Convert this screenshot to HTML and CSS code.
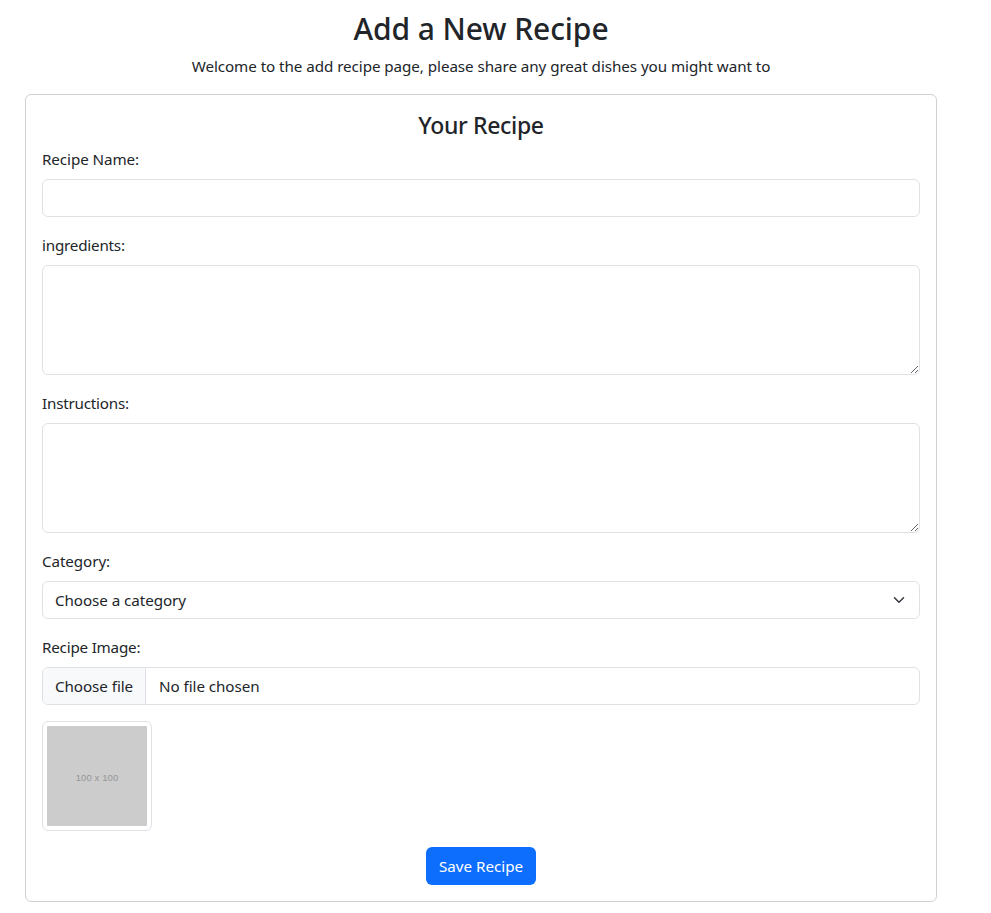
FILE: index.html
```html
<!DOCTYPE html>
<html lang="en">
<head>
<meta charset="utf-8">
<title>Add a New Recipe</title>
<link rel="stylesheet" href="styles.css">
</head>
<body>
<main class="page">
  <header class="intro">
    <h1 class="title">Add a New Recipe</h1>
    <p class="lead">Welcome to the add recipe page, please share any great dishes you might want to</p>
  </header>
  <form class="card">
    <h2 class="card-title">Your Recipe</h2>
    <div class="field">
      <label class="label" for="name">Recipe Name:</label>
      <input class="control" id="name" type="text">
    </div>
    <div class="field">
      <label class="label label-tight" for="ingredients">ingredients:</label>
      <textarea class="control area" id="ingredients"></textarea>
    </div>
    <div class="field">
      <label class="label label-tight" for="instructions">Instructions:</label>
      <textarea class="control area" id="instructions"></textarea>
    </div>
    <div class="field">
      <label class="label">Category:</label>
      <div class="control select">
        <span>Choose a category</span>
        <svg class="chevron" viewBox="0 0 16 16" width="16" height="12"><path fill="none" stroke="#343a40" stroke-linecap="round" stroke-linejoin="round" stroke-width="2" d="m2 5 6 6 6-6"/></svg>
      </div>
    </div>
    <div class="field">
      <label class="label label-tight">Recipe Image:</label>
      <div class="control file">
        <span class="file-button">Choose file</span>
        <span class="file-name">No file chosen</span>
      </div>
    </div>
    <div class="thumb"><div class="placeholder">100 x 100</div></div>
    <div class="actions"><button class="save" type="button">Save Recipe</button></div>
  </form>
</main>
</body>
</html>
```
FILE: styles.css
```css
* { box-sizing: border-box; }
body {
  margin: 0;
  background: #fff;
  color: #212529;
  font: 16px/24px "Segoe UI", "Noto Sans", "Open Sans", sans-serif;
}
.page { width: 912px; margin-left: 25px; padding-top: 10px; }
.intro { text-align: center; }
.title { margin: 0 0 6px; font-size: 30px; line-height: 38px; font-weight: 500; letter-spacing: -0.08px; }
.lead { margin: 0 0 16px; font-size: 15.2px; letter-spacing: -0.06px; }
.card { height: 808px; padding: 16px; border: 1px solid #ced0d2; border-radius: 6px; }
.card-title { margin: 0 0 7px; font-size: 23px; line-height: 29px; font-weight: 500; letter-spacing: -0.35px; text-align: center; }
.field { margin-bottom: 16px; }
.label { display: block; width: max-content; margin-bottom: 8px; font-size: 15.2px; letter-spacing: -0.08px; }
.label-tight { letter-spacing: -0.2px; }
.control {
  display: block;
  width: 100%;
  height: 38px;
  padding: 6px 12px;
  border: 1px solid #dee2e6;
  border-radius: 6px;
  background: #fff;
  color: #212529;
  font: inherit;
  font-size: 15.2px;
  letter-spacing: -0.06px;
}
.area { height: 110px; resize: vertical; }
.select { display: flex; align-items: center; justify-content: space-between; }
.file { display: flex; padding: 0; overflow: hidden; }
.file-button { width: 103px; padding: 6px 12px; background: #f8f9fa; border-right: 1px solid #dee2e6; white-space: nowrap; }
.file-name { padding: 6px 13px; }
.thumb { width: 110px; height: 110px; padding: 4px; border: 1px solid #dee2e6; border-radius: 6px; }
.placeholder { width: 100px; height: 100px; border-radius: 1px; background: #ccc; color: #969696; font: 9.5px/103px "Liberation Sans", sans-serif; letter-spacing: 0.1px; text-align: center; }
.actions { margin-top: 16px; }
.save { display: block; width: 110px; height: 38px; margin: 0 auto; padding: 0; border: 0; border-radius: 6px; background: #0d6efd; color: #fff; font: inherit; font-size: 15.2px; }
```
